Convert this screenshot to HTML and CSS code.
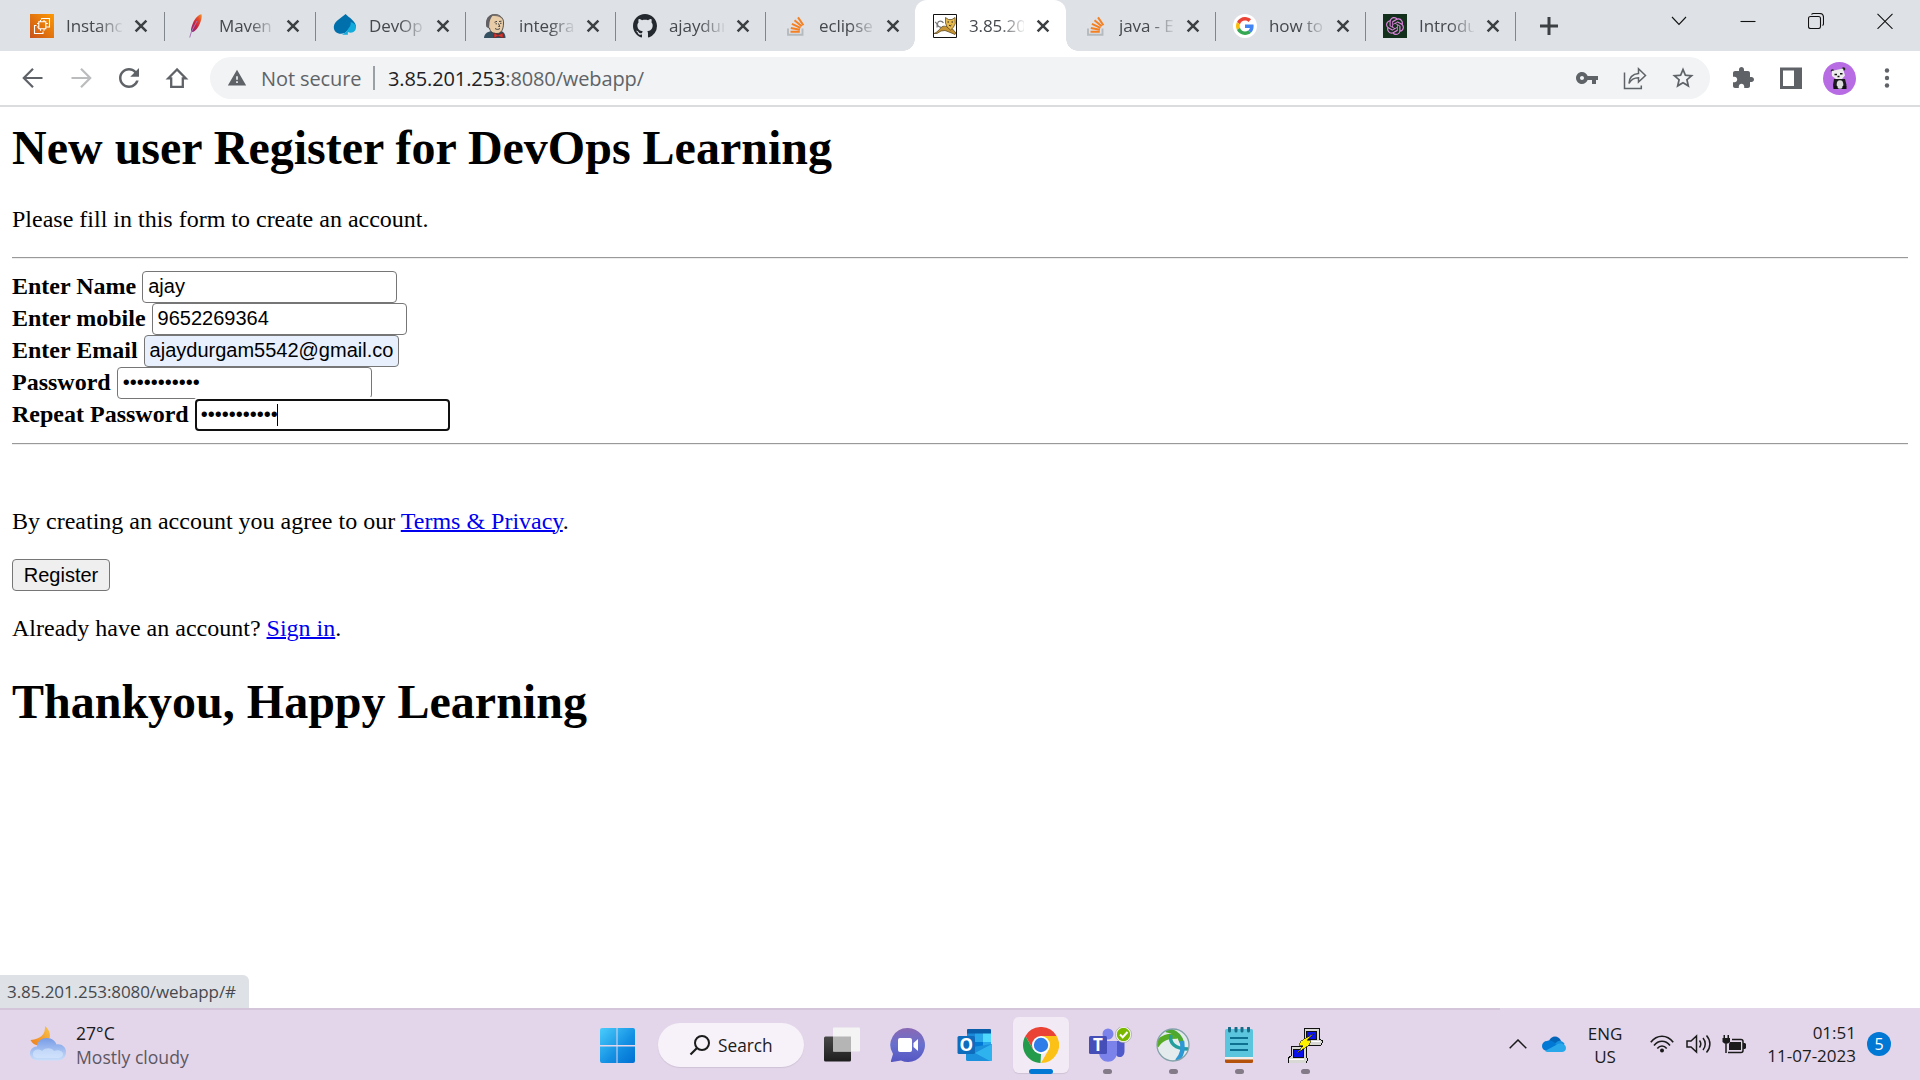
FILE: index.html
```html
<!DOCTYPE html>
<html lang="en">
<head>
<meta charset="utf-8">
<title>New user Register</title>
<link rel="stylesheet" href="styles.css">
</head>
<body>
<svg class="symbols" width="0" height="0" aria-hidden="true">
  <symbol id="x" viewBox="0 0 14 14"><path d="M1.6 1.6 12.4 12.4M12.4 1.6 1.6 12.4" stroke="#3c4043" stroke-width="2.5" fill="none"/></symbol>
  <symbol id="stack" viewBox="0 0 24 24"><path d="M5 14.5v6.3h14.5v-6.3" fill="none" stroke="#b5babf" stroke-width="1.9"/><path d="M7.5 17.7h9.3M7.8 13.9l9.1 1.8M8.9 9.9l8.6 4M11.5 6.2l7.2 6M15 3.4l5.4 7.8" fill="none" stroke="#f48024" stroke-width="2"/></symbol>
</svg>

<header class="tabstrip">
  <div class="tab first">
    <svg class="fav" viewBox="0 0 24 24"><defs><linearGradient id="aws" x1="0" y1="1" x2="1" y2="0"><stop offset="0" stop-color="#c8511b"/><stop offset="1" stop-color="#f90"/></linearGradient></defs><path fill="url(#aws)" d="M0 0h24v24H0z"/><path d="M8.800 7.800h7v7h-7zM10.500 6v1.800M14 6v1.800M10.500 15v1.800M14 15v1.800M7 9.500h1.800M7 13h1.800M16 9.500h1.800M16 13h1.800M11.500 5.500v-1h8v8.500h-2M6.500 11.500h-2v8h8.500v-2" fill="none" stroke="#fff" stroke-width="1.100"/></svg>
    <span class="title">Instanc</span><svg class="close"><use href="#x"/></svg>
  </div>
  <div class="tab">
    <svg class="fav" viewBox="0 0 24 24"><defs><linearGradient id="feather" x1="1" y1="0" x2="0" y2="1"><stop offset="0" stop-color="#f69923"/><stop offset=".3" stop-color="#e4492c"/><stop offset=".6" stop-color="#c8203f"/><stop offset="1" stop-color="#7e2d8e"/></linearGradient></defs><path fill="url(#feather)" d="M18.500.2c-3 .2-6.500 4.200-8.500 8.800-1.500 3.500-2.200 6.500-2 8.600l2 .4c2.200-1 5-4.200 6.500-7.600 1.800-4 2.800-8 2-10.200z"/><path d="M14 7 8.500 17.500 6.700 23.500" fill="none" stroke="#a978b6"/></svg>
    <span class="title">Maven</span><svg class="close"><use href="#x"/></svg>
  </div>
  <div class="tab">
    <svg class="fav" viewBox="0 0 24 24"><path fill="#0070ad" d="M12.500 0C9.500 3.300 1 7 .8 12.700.6 17 4 19.800 7.800 19.800c3 0 5.200-1.300 6.700-3.300 2-2.500 5.500-2.800 8.500-3.300C23.600 7.500 15.500 3.300 12.500 0z"/><path fill="#12abdb" d="M23 12.500c-1-3.300-4-4-5.500-4.500 1 3-1.500 5.500-3 8-1.200 2-3 3.300-5.500 4.800h6c-.3-.8-.1-2-.1-2.800 4 2 8.500-.5 8.100-5.500z"/></svg>
    <span class="title">DevOp</span><svg class="close"><use href="#x"/></svg>
  </div>
  <div class="tab">
    <svg class="fav" viewBox="0 0 24 24"><path fill="#335061" d="M1 24c0-2 1-4 3-5.500L8 17h9c3.500 0 5.500 3 5.500 7z"/><path fill="#e8cda8" stroke="#303030" stroke-width=".8" d="M4 8c0-5 3.500-7.500 8-7.500S21 4 20.500 9c0 6-2 10.500-6.500 10.500S7 17.500 6.500 14C4 14 3 11 4 8z"/><path fill="#626064" d="M3.500 13C1.500 5 6 .2 11.500.5 8 2.500 7.500 5 6.500 8.500L6 14z"/><path fill="#77716f" d="M10 .5c5-.8 9 2 10 5.500-2-3-5.500-4.500-10-4z"/><path d="M11.500 8.300l2.500-1M16 7.500l2.500-.3M12.500 9.800h1.500M17 9.300h1.500M15.500 9.500l1.300 3h-1.500M12 14.500c1.500 1.200 3.500 1.200 5 0" fill="none" stroke="#333" stroke-width=".9"/><path fill="#d33833" stroke="#6b1815" stroke-width=".5" d="m11 19 4 2 5-2v5l-5-2-4 2z"/></svg>
    <span class="title">integra</span><svg class="close"><use href="#x"/></svg>
  </div>
  <div class="tab">
    <svg class="fav" viewBox="0 0 16 16"><path fill="#24292f" d="M8 0C3.580 0 0 3.580 0 8c0 3.540 2.290 6.530 5.470 7.590.4.070.55-.170.55-.380 0-.190-.010-.820-.010-1.490-2.010.370-2.530-.490-2.690-.940-.090-.230-.480-.940-.820-1.130-.280-.150-.680-.520-.010-.530.630-.010 1.080.580 1.230.820.720 1.210 1.870.870 2.330.660.070-.520.280-.870.510-1.070-1.780-.2-3.640-.890-3.640-3.950 0-.870.310-1.590.820-2.150-.080-.2-.360-1.020.080-2.120 0 0 .670-.210 2.200.820.640-.180 1.320-.270 2-.270s1.360.090 2 .270c1.530-1.040 2.200-.820 2.200-.820.440 1.100.160 1.920.080 2.120.510.560.820 1.270.820 2.150 0 3.070-1.870 3.750-3.650 3.950.290.250.540.730.540 1.480 0 1.070-.010 1.930-.010 2.200 0 .210.150.460.550.380A8.010 8.010 0 0 0 16 8c0-4.420-3.580-8-8-8z"/></svg>
    <span class="title">ajaydur</span><svg class="close"><use href="#x"/></svg>
  </div>
  <div class="tab nosep">
    <svg class="fav"><use href="#stack"/></svg>
    <span class="title">eclipse</span><svg class="close"><use href="#x"/></svg>
  </div>
  <div class="tab active">
    <svg class="fav" viewBox="0 0 24 24"><path fill="#fff" stroke="#111" d="M.5.5h23v23H.5z"/><path d="M10.500 9C9 6.500 5 6.500 4.500 9.500S7 13.500 8 13M2 8c2 1 2.500 3 2 5.500" fill="none" stroke="#777" stroke-width="1.200"/><path fill="#c59332" stroke="#4d3b1a" stroke-width=".7" d="M1 19.500c3-1 5-3.500 7.500-6.500 2-1.500 4-.5 5-.5l6 2.500 3.500 4-1 1.500-6-2.500-4-1.500-4 .5-4 2.500H1z"/><path fill="#e5b94e" stroke="#4d3b1a" stroke-width=".7" d="m12.500 3.500 3 2h3.500l3-2 .3 6-2 4-2.800 2.500-3.500-3-1.500-4z"/><path d="M14.500 8h1.500M18.500 8H20M16 11l1.200 1 1.200-1" stroke="#222" fill="none"/></svg>
    <span class="title">3.85.20</span><svg class="close"><use href="#x"/></svg>
  </div>
  <div class="tab">
    <svg class="fav"><use href="#stack"/></svg>
    <span class="title">java - E</span><svg class="close"><use href="#x"/></svg>
  </div>
  <div class="tab">
    <svg class="fav" viewBox="-8 -8 64 64"><circle cx="24" cy="24" r="32" fill="#fff"/><path fill="#ea4335" d="M24 9.500c3.540 0 6.710 1.220 9.210 3.600l6.850-6.850C35.900 2.380 30.470 0 24 0 14.620 0 6.510 5.380 2.560 13.220l7.980 6.190C12.430 13.720 17.740 9.500 24 9.500z"/><path fill="#4285f4" d="M46.980 24.550c0-1.570-.150-3.090-.380-4.550H24v9.020h12.940c-.580 2.960-2.260 5.480-4.780 7.180l7.730 6c4.510-4.180 7.090-10.360 7.090-17.650z"/><path fill="#fbbc05" d="M10.530 28.590c-.480-1.450-.760-2.990-.760-4.590s.270-3.140.760-4.590l-7.980-6.190C.920 16.460 0 20.120 0 24c0 3.880.920 7.540 2.560 10.780l7.970-6.190z"/><path fill="#34a853" d="M24 48c6.480 0 11.930-2.130 15.890-5.810l-7.730-6c-2.150 1.450-4.920 2.300-8.160 2.300-6.260 0-11.570-4.220-13.470-9.910l-7.980 6.190C6.510 42.620 14.620 48 24 48z"/></svg>
    <span class="title">how to</span><svg class="close"><use href="#x"/></svg>
  </div>
  <div class="tab">
    <svg class="fav" viewBox="-4 -4 32 32"><path fill="#12301b" d="M-4-4h32v32H-4z"/><path fill="#dd83dd" d="M22.2819 9.8211a5.9847 5.9847 0 0 0-.5157-4.9108 6.0462 6.0462 0 0 0-6.5098-2.9A6.0651 6.0651 0 0 0 4.9807 4.1818a5.9847 5.9847 0 0 0-3.9977 2.9 6.0462 6.0462 0 0 0 .7427 7.0966 5.98 5.98 0 0 0 .511 4.9107 6.051 6.051 0 0 0 6.5146 2.9001A5.9847 5.9847 0 0 0 13.2599 24a6.0557 6.0557 0 0 0 5.7718-4.2058 5.9894 5.9894 0 0 0 3.9977-2.9001 6.0557 6.0557 0 0 0-.7475-7.0729zm-9.022 12.6081a4.4755 4.4755 0 0 1-2.8764-1.0408l.1419-.0804 4.7783-2.7582a.7948.7948 0 0 0 .3927-.6813v-6.7369l2.02 1.1686a.071.071 0 0 1 .038.052v5.5826a4.504 4.504 0 0 1-4.4945 4.4944zm-9.6607-4.1254a4.4708 4.4708 0 0 1-.5346-3.0137l.142.0852 4.783 2.7582a.7712.7712 0 0 0 .7806 0l5.8428-3.3685v2.3324a.0804.0804 0 0 1-.0332.0615L9.74 19.9502a4.4992 4.4992 0 0 1-6.1408-1.6464zM2.3408 7.8956a4.485 4.485 0 0 1 2.3655-1.9728V11.6a.7664.7664 0 0 0 .3879.6765l5.8144 3.3543-2.0201 1.1685a.0757.0757 0 0 1-.071 0l-4.8303-2.7865A4.504 4.504 0 0 1 2.3408 7.872zm16.5963 3.8558L13.1038 8.364 15.1192 7.2a.0757.0757 0 0 1 .071 0l4.8303 2.7913a4.4944 4.4944 0 0 1-.6765 8.1042v-5.6772a.79.79 0 0 0-.407-.667zm2.0107-3.0231l-.142-.0852-4.7735-2.7818a.7759.7759 0 0 0-.7854 0L9.409 9.2297V6.8974a.0662.0662 0 0 1 .0284-.0615l4.8303-2.7866a4.4992 4.4992 0 0 1 6.6802 4.66zM8.3065 12.863l-2.02-1.1638a.0804.0804 0 0 1-.038-.0567V6.0742a4.4992 4.4992 0 0 1 7.3757-3.4537l-.142.0805L8.704 5.459a.7948.7948 0 0 0-.3927.6813zm1.0976-2.3654l2.602-1.4998 2.6069 1.4998v2.9994l-2.5974 1.4997-2.6067-1.4997Z"/></svg>
    <span class="title">Introdu</span><svg class="close"><use href="#x"/></svg>
  </div>
  <svg class="newtab" viewBox="0 0 18 18"><path d="M9 0v18M0 9h18" stroke="#3c4043" stroke-width="3"/></svg>
  <div class="winctl">
    <svg viewBox="0 0 16 16"><path d="M1 4l7 7.500L15 4"/></svg>
    <svg viewBox="0 0 16 16"><path d="M.5 8.500h15"/></svg>
    <svg viewBox="0 0 16 16"><rect x=".5" y="3.500" width="12" height="12" rx="2"/><path d="M3.500 1.500c.4-.7 1-1 2-1h6c2.500 0 4 1.500 4 4v6c0 1-.3 1.600-1 2"/></svg>
    <svg viewBox="0 0 16 16"><path d="M.5.8 15.500 15.800M15.500.8.5 15.800"/></svg>
  </div>
</header>

<nav class="toolbar">
  <div class="navbtns">
    <svg viewBox="0 0 24 24"><path d="M21.500 12H3.500M12 2.800 2.800 12l9.200 9.200" fill="none" stroke="#5f6368" stroke-width="2.200"/></svg>
    <svg viewBox="0 0 24 24"><path d="M2.500 12h18M12 2.800 21.200 12 12 21.200" fill="none" stroke="#babcbe" stroke-width="2.200"/></svg>
    <svg class="reload" viewBox="0 0 24 24"><path fill="#5f6368" d="M17.650 6.350C16.200 4.900 14.210 4 12 4c-4.420 0-7.990 3.580-7.990 8s3.570 8 7.990 8c3.730 0 6.840-2.550 7.730-6h-2.080c-.820 2.330-3.040 4-5.650 4-3.310 0-6-2.690-6-6s2.690-6 6-6c1.660 0 3.140.690 4.220 1.780L13 11h7V4l-2.350 2.350z"/></svg>
    <svg viewBox="0 0 24 24"><path d="M12 3.500 3.300 12.300h2.900v8.500h11.600v-8.500h2.900z" fill="none" stroke="#5f6368" stroke-width="2.300"/></svg>
  </div>
  <div class="omnibox">
    <svg class="warn" viewBox="0 0 24 24"><path fill="#5f6368" d="M1 21h22L12 2 1 21zm12-3h-2v-2h2v2zm0-4h-2v-4h2v4z"/></svg>
    <span class="insecure">Not secure</span><i class="divider"></i>
    <span class="url"><b>3.85.201.253</b>:8080/webapp/</span>
    <div class="boxicons">
      <svg viewBox="0 0 24 24"><path fill="#5f6368" d="M12.650 10C11.830 7.670 9.610 6 7 6c-3.310 0-6 2.690-6 6s2.690 6 6 6c2.610 0 4.830-1.670 5.650-4H17v4h4v-4h2v-4H12.650zM7 14c-1.100 0-2-.9-2-2s.9-2 2-2 2 .9 2 2-.9 2-2 2z"/></svg>
      <svg viewBox="0 0 24 24"><path d="M1.500 6.500v16h16.800v-3M6 17.500c.3-6 3.500-9.500 9.500-10V2.800L22.500 9.500l-7 6.500v-4.300C11 11.700 8 13.500 6 17.500z" fill="none" stroke="#5f6368" stroke-width="1.500"/></svg>
      <svg viewBox="0.800 0.800 22.400 22.400"><path fill="#5f6368" d="M22 9.240l-7.190-.620L12 2 9.190 8.630 2 9.240l5.460 4.730L5.820 21 12 17.270 18.180 21l-1.630-7.030L22 9.240zM12 15.400l-3.760 2.270 1-4.280-3.320-2.880 4.380-.380L12 6.100l1.710 4.040 4.380.380-3.320 2.880 1 4.280L12 15.400z"/></svg>
    </div>
  </div>
  <div class="actions">
    <svg viewBox="0 0 24 24"><path fill="#5f6368" d="M20.500 11H19V7c0-1.100-.9-2-2-2h-4V3.500C13 2.120 11.880 1 10.500 1S8 2.120 8 3.500V5H4c-1.100 0-1.990.9-1.990 2v3.800H3.500c1.490 0 2.700 1.210 2.700 2.700s-1.210 2.700-2.700 2.700H2V20c0 1.100.9 2 2 2h3.800v-1.500c0-1.490 1.210-2.700 2.700-2.700 1.490 0 2.700 1.210 2.700 2.700V22H17c1.100 0 2-.9 2-2v-4h1.500c1.380 0 2.500-1.120 2.500-2.500S21.880 11 20.500 11z"/></svg>
    <svg viewBox="0 0 24 24"><path fill="#5f6368" fill-rule="evenodd" d="M1 1.500h22v21.500H1zM4 4.500v15.500h11V4.500z"/></svg>
    <svg class="avatar" viewBox="0 0 33 33"><circle cx="16.500" cy="16.500" r="16.500" fill="#b76ce4"/><circle cx="9.500" cy="9" r="1.800" fill="#222"/><circle cx="20.500" cy="7" r="1.800" fill="#222"/><path d="M11 17h11l1.500 6-1 4H11l-1-4z" fill="#1d1a20"/><ellipse cx="17" cy="22.500" rx="3.300" ry="4.300" fill="#dcdcdc"/><path d="M8.500 9 20 6.500l2 7-3 3.500h-6l-4-3z" fill="#ececec"/><path d="M11.500 12.500h2.500M17 11.800h2.500M14.500 14.500h2" stroke="#111" stroke-width="1.600"/><path d="M10.500 25.500h4M19.500 25.500h4" stroke="#111" stroke-width="3"/></svg>
    <svg viewBox="0 0 24 24"><g fill="#5f6368"><circle cx="12" cy="4.500" r="2.200"/><circle cx="12" cy="12" r="2.200"/><circle cx="12" cy="19.500" r="2.200"/></g></svg>
  </div>
</nav>

<main class="page">
  <h1 class="heading">New user Register for DevOps Learning</h1>
  <p class="para intro">Please fill in this form to create an account.</p>
  <hr class="rule">
  <form class="form">
    <div class="field"><label>Enter Name</label><input type="text" value="ajay"></div>
    <div class="field"><label>Enter mobile</label><input type="text" value="9652269364"></div>
    <div class="field"><label>Enter Email</label><input class="filled" type="text" value="ajaydurgam5542@gmail.com"></div>
    <div class="field"><label>Password</label><input type="password" value="durgam12345"></div>
    <div class="field"><label>Repeat Password</label><span class="focus"><input type="password" value="durgam12345"><i class="caret"></i></span></div>
  </form>
  <hr class="rule">
  <p class="para terms">By creating an account you agree to our <a href="#">Terms &amp; Privacy</a>.</p>
  <button class="register" type="button">Register</button>
  <p class="para signin">Already have an account? <a href="#">Sign in</a>.</p>
  <h1 class="heading thanks">Thankyou, Happy Learning</h1>
  <div class="status"><span>3.85.201.253:8080/webapp/#</span></div>
</main>

<footer class="taskbar">
  <div class="weather">
    <svg viewBox="0 0 36 36"><defs><linearGradient id="moon" x1="1" y1="0" x2="0" y2="1"><stop offset="0" stop-color="#f8c64c"/><stop offset="1" stop-color="#ee7d19"/></linearGradient><linearGradient id="cl" x1="0" y1="0" x2="0" y2="1"><stop offset="0" stop-color="#779be6"/><stop offset="1" stop-color="#c9defa"/></linearGradient></defs><path fill="url(#moon)" d="M15 0c.5 8-4 13-14.500 14C3 20 10 21 16 17c5-3.500 6-11-1-17z"/><path fill="url(#cl)" d="M7 20.500C7 15 12 12 17 12c5 0 8.500 3 9.500 6.500 5-1 9.500 2.500 9.500 7.500s-4 8.500-8 8.500H8c-5 0-8-3-8-7s3-7 7-7z"/><path fill="#d9e8fd" opacity=".6" d="M3 28c0-4 5-6 9-3 4-4 10-3 12 0 4-2 9 0 9 3s-3 4-6 4H9c-4 0-6-1-6-4z"/></svg>
    <div class="wtext"><span>27°C</span><span class="dim">Mostly cloudy</span></div>
  </div>
  <div class="app"><svg class="win" viewBox="0 0 35 35"><defs><linearGradient id="wl" gradientUnits="userSpaceOnUse" x1="0" y1="0" x2="35" y2="35"><stop offset="0" stop-color="#4bcdfc"/><stop offset=".6" stop-color="#128ee2"/><stop offset="1" stop-color="#0070d2"/></linearGradient></defs><path fill="url(#wl)" d="M0 2q0-2 2-2h14.500v17H0zM17.500 0H33q2 0 2 2v15H17.500zM0 18.500h16.500V35H2q-2 0-2-2zM17.500 18.500H35V33q0 2-2 2H17.500z"/></svg></div>
  <div class="search"><svg viewBox="0 0 22 22"><circle cx="13" cy="9" r="7" fill="none" stroke="#1b1b1b" stroke-width="2"/><path d="M8 14 1.500 20.500" stroke="#1b1b1b" stroke-width="2.200"/></svg><span>Search</span></div>
  <div class="app"><svg viewBox="0 0 36 36"><defs><linearGradient id="tv" x1="0" y1="0" x2="0" y2="1"><stop offset="0" stop-color="#484848"/><stop offset="1" stop-color="#1e1e1e"/></linearGradient></defs><rect y="9.500" width="27" height="25" rx="1.500" fill="url(#tv)"/><rect x="9" y=".5" width="27" height="24" rx="1" fill="#f4f4f4"/><path fill="#b5b5b5" d="M9 9.500h18v15H9z"/></svg></div>
  <div class="app"><svg viewBox="0 0 36 36"><defs><linearGradient id="ch" x1="0" y1="0" x2="0" y2="1"><stop offset="0" stop-color="#8a68b4"/><stop offset=".5" stop-color="#6870ce"/><stop offset="1" stop-color="#5556c2"/></linearGradient></defs><path fill="url(#ch)" d="M18 1a17 17 0 1 1-7 32.500L2 35c-1 0-1.300-.5-1-1.500L3 27A17 17 0 0 1 18 1z"/><rect x="8" y="11" width="14" height="14" rx="2" fill="#fff"/><path fill="#fff" d="m23.500 16 4.500-4v12l-4.500-4z"/></svg></div>
  <div class="app shift"><svg viewBox="0 0 36 36"><path fill="#0a5da8" d="M10 3q0-1 1-1h22q1 0 1 1v7H10z"/><path fill="#1a8ad8" d="M10 6.500h8v17h-8z"/><path fill="#28a8ea" d="M18 6.500h8v9h-8z"/><path fill="#50d9ff" d="M26 6.500h8v9h-8z"/><path fill="#0078d4" d="M18 15h8v8h-8z"/><path fill="#28a8ea" d="M26 15h8v5h-8z"/><path fill="#1b90dc" d="M9 21l26-4v15.500q0 1.500-1.500 1.500h-23Q9 34 9 32.500z"/><path fill="#2fb3ef" d="M35 17 18 26l15 8q2 0 2-1.500z"/><rect x=".5" y="9" width="17.500" height="18" rx="1.500" fill="#0f6cbd"/><text class="glyph" x="9.300" y="23.500">O</text></svg></div>
  <div class="app open"><svg viewBox="0 0 36 36"><path fill="#ea4335" d="M2.400 9A18 18 0 0 1 33.600 9H18l-7.800 13.500z"/><path fill="#249b4a" d="M2.400 9l7.800 13.500L18 27l-.5 9A18 18 0 0 1 2.400 9z"/><path fill="#fbc116" d="M33.600 9A18 18 0 0 1 18 36l7.800-13.500L18 9z"/><circle cx="18" cy="18" r="9" fill="#fff"/><circle cx="18" cy="18" r="7.200" fill="#2f7de9"/></svg><i class="mark wide"></i></div>
  <div class="app"><svg class="teams" viewBox="0 0 44 36"><circle cx="19" cy="7" r="5.500" fill="#7b83eb"/><circle cx="31" cy="9" r="4" fill="#5059c9"/><path fill="#5059c9" d="M26 14h9.500v10c0 8-9.500 8-9.500 0z"/><path fill="#7b83eb" d="M10 14h18v11c0 13-18 13-18 0z"/><rect y="9" width="18" height="18" rx="1.500" fill="#464eb8"/><text class="glyph" x="9" y="23.500">T</text><circle cx="34.500" cy="7.500" r="8" fill="#fff" stroke="#999" stroke-width=".7"/><circle cx="34.500" cy="7.500" r="6.700" fill="#7ab800"/><path d="m31 7.500 2.700 2.700L38.500 5" fill="none" stroke="#fff" stroke-width="2"/></svg><i class="mark"></i></div>
  <div class="app"><svg viewBox="0 0 36 36"><defs><clipPath id="globe"><circle cx="18" cy="18" r="16"/></clipPath></defs><circle cx="18" cy="18" r="16.500" fill="#e4ebec"/><g clip-path="url(#globe)" fill="none"><path d="M1 19C6 10 14 9 22 9" stroke="#58ac25" stroke-width="5.500"/><path d="M11 3c8 1 14 5 16 13" stroke="#4ca82f" stroke-width="4.500"/><path d="M16 8c-2 8 4 14 17 14" stroke="#239e9d" stroke-width="3.500"/><path d="M27 14c1 8 1 13-5 20" stroke="#2c98d4" stroke-width="4.500"/></g><circle cx="18" cy="18" r="16" fill="none" stroke="#839fa9" stroke-width="1.300"/></svg><i class="mark"></i></div>
  <div class="app"><svg viewBox="0 0 36 36"><path fill="#b4510b" d="M4 31h28v3.500q0 1.500-1.500 1.500h-25Q4 36 4 34.500z"/><path fill="#f3eee9" d="M4 30h28v2.500H4z"/><path fill="#5cc5de" d="M5.500 2h25Q32 2 32 3.500V30H4V3.500Q4 2 5.500 2z"/><path d="M8.500 1v3M15 1v3M21 1v3M27.500 1v3" stroke="#176b87" stroke-width="3" stroke-linecap="round"/><path d="M9 11h18M9 17h18M9 23h18" stroke="#0d7091" stroke-width="2"/></svg><i class="mark"></i></div>
  <div class="app"><svg viewBox="0 0 36 36" shape-rendering="crispEdges"><g stroke="#111" stroke-width="1"><path fill="#d8d8d4" d="M17 1h15v11l4 2-2 4H19l-2-4z"/><path fill="#0a12ec" d="M19 4h10v8H19z"/><path fill="#d8d8d4" d="M4 19h15v11l2 2-2 4H1v-5l3-2z"/><path fill="#0a12ec" d="M6 22h10v8H6z"/></g><path fill="#fff" d="M2 32h15v1H2zM18 14h15v1H18z"/><path fill="#fff200" stroke="#222" stroke-width=".6" d="m26 7-12 7-2 4 4 1-6 7 12-8 2-4-4-1z"/></svg><i class="mark"></i></div>
  <div class="tray">
    <svg class="chev" viewBox="0 0 18 10"><path d="M.7 9.300 9 1l8.300 8.300" fill="none" stroke="#1b1b1b" stroke-width="1.500"/></svg>
    <svg class="cloud" viewBox="0 0 24 16"><path fill="#0364b8" d="M7 5c2-6 10-6 12 0l-5 5z"/><path fill="#0078d4" d="M5 15a5 5 0 0 1 0-10c3-1 6 0 8 2l3 2-8 7z"/><path fill="#1490df" d="M13 8c2-3 4-3.500 6-3 3 1 3.500 3 3.500 3L20 12z"/><path fill="#28a8ea" d="M3 15 15 8.500c3-2 9-.5 9 3.500 0 2.500-2 4-4 4H5z"/></svg>
    <div class="lang"><span>ENG</span><span>US</span></div>
    <svg class="net" viewBox="0 0 24 18"><g fill="none" stroke="#1b1b1b" stroke-width="1.600"><path d="M.8 7.200C7-.7 17-.7 23.200 7.200M4 10.500c4.500-5.600 11.500-5.600 16 0M7.300 13.500c2.700-3.400 6.700-3.400 9.400 0"/></g><circle cx="12" cy="15.500" r="2" fill="#1b1b1b"/></svg>
    <svg class="vol" viewBox="0 0 25 20"><g fill="none" stroke="#1b1b1b" stroke-width="1.500"><path d="M1 7h4l5.500-5v16L5 13H1zM13.500 6.500c1.500 2 1.500 5 0 7M17 4c3 3.500 3 8.500 0 12M20.500 1.500c4.500 5 4.500 12 0 17"/></g></svg>
    <svg class="bat" viewBox="0 0 24 19"><path fill="#1b1b1b" d="M1.500 0H3v3h2.500V0H7v3h1v4L6 8.500H2.500L.5 7V3h1zM8 7h11v8H7v-6z"/><path d="M4 8v10M10 4.500h9q2 0 2 2v9q0 2-2 2H6" fill="none" stroke="#1b1b1b" stroke-width="1.500"/><path fill="#1b1b1b" d="M21 8h2l1 1v4l-1 1h-2z"/></svg>
    <div class="clock"><span>01:51</span><span>11-07-2023</span></div>
    <div class="badge">5</div>
  </div>
</footer>
</body>
</html>
```

FILE: styles.css
```css
* { box-sizing: border-box; }
body {
  margin: 0;
  width: 1920px;
  height: 1080px;
  overflow: hidden;
  display: flex;
  flex-direction: column;
  background: #fff;
  font-family: "Open Sans", "Noto Sans", sans-serif;
}
svg { flex: none; display: block; }
.symbols { position: absolute; }

/* tab strip */
.tabstrip { height: 51px; flex: none; display: flex; background: #dee1e6; padding-left: 14px; }
.tab {
  width: 150px; height: 51px; padding-left: 17px; flex: none;
  display: flex; align-items: center; position: relative;
}
.tab.first { width: 152px; padding-left: 16px; }
.tab.first .title { width: 56px; }
.tab.first::after { right: 1px; }
.tab::after {
  content: ""; position: absolute; right: 0; top: 12px;
  width: 1px; height: 29px; background: #80868b;
}
.tab.nosep::after { display: none; }
.fav { width: 24px; height: 24px; position: relative; top: .5px; }
.title {
  margin-left: 12px; width: 55px; overflow: hidden; white-space: nowrap;
  font-size: 17px; line-height: 30px; letter-spacing: -.1px; color: #45494d;
  -webkit-mask-image: linear-gradient(90deg, #000 55%, transparent 105%);
  mask-image: linear-gradient(90deg, #000 55%, transparent 105%);
}
.close { width: 14px; height: 14px; margin-left: 12px; }
.tab.active { width: 151px; margin-left: -1px; padding-left: 18px; background: #fff; border-radius: 12px 12px 0 0; }
.tab.active::before, .tab.active::after {
  content: ""; position: absolute; top: auto; bottom: 0; width: 12px; height: 12px;
}
.tab.active::before { left: -12px; background: radial-gradient(circle at 0 0, transparent 11.5px, #fff 12px); }
.tab.active::after { right: -12px; background: radial-gradient(circle at 100% 0, transparent 11.5px, #fff 12px); }
.newtab { width: 18px; height: 18px; margin: 17px 0 0 24px; }
.winctl { display: flex; gap: 52.5px; margin: 13px 0 0 113px; }
.winctl svg { width: 16px; height: 16px; fill: none; stroke: #111; stroke-width: 1.1; }

/* toolbar */
.toolbar {
  height: 56px; flex: none; display: flex; align-items: center;
  border-bottom: 2px solid #dadcde; background: #fff; padding-left: 21px;
}
.navbtns { display: flex; gap: 24px; width: 189px; align-items: center; }
.navbtns svg { width: 24px; height: 24px; }
.navbtns .reload { width: 30px; height: 30px; margin: 0 -3px; }
.omnibox {
  width: 1500px; height: 42px; border-radius: 21px; background: #f1f3f4;
  display: flex; align-items: center; padding: 0 15px 0 17px; flex: none;
}
.warn { width: 20px; height: 20px; }
.insecure { margin-left: 14px; width: 102px; font-size: 20px; letter-spacing: -.1px; color: #5f6368; white-space: nowrap; }
.divider { width: 2px; height: 24px; background: #9aa0a6; margin: 0 13px 0 10px; }
.url { font-size: 20px; letter-spacing: -.12px; color: #5f6368; white-space: nowrap; }
.url b { font-weight: 400; color: #202124; }
.boxicons { display: flex; gap: 24px; margin-left: auto; }
.boxicons svg { width: 24px; height: 24px; }
.actions { display: flex; align-items: center; margin-left: 21px; gap: 24px; }
.actions svg { width: 24px; height: 24px; }
.actions .avatar { width: 33px; height: 33px; margin: 0 -4.5px; }

/* web page */
.page {
  flex: 1; position: relative; padding: 13px 12px 0; overflow: hidden;
  font-family: "Liberation Serif", serif; font-size: 24px; line-height: 28px; color: #000;
}
.heading { margin: 0; font-size: 48px; line-height: 55px; }
.para { margin: 0; }
.intro { margin-top: 30px; }
.rule { margin: 24px 0 12px; border: 0; height: 2px; border-top: 1px solid #999; border-bottom: 1px solid #eee; }
.field { display: flex; height: 32px; align-items: center; }
.field label { font-weight: 700; margin: 0 6px 2px 0; white-space: nowrap; }
.field input {
  width: 255px; height: 32px; margin: 0; padding: 0 5px 1px; border: 1px solid #767676; border-radius: 4px;
  font: 20px "Liberation Sans", sans-serif; color: #000; background: #fff; outline: 0;
}
.field input.filled { background: #e8f0fe; }
.form + .rule { margin-top: 12px; }
.field .focus { position: relative; }
.field .focus input { display: block; border: 2px solid #101010; padding: 0 4px 1px; box-shadow: 0 0 0 2px #fff; }
.caret { position: absolute; left: 82px; top: 5px; width: 1px; height: 22px; background: #000; }
.terms { margin-top: 62px; }
.page a { color: #0000ee; text-decoration-thickness: 2px; }
.register {
  display: block; margin-top: 24px; width: 98px; height: 32px; padding: 0;
  border: 1px solid #767676; border-radius: 4px; background: #efefef; color: #000;
  font: 20px "Liberation Sans", sans-serif;
}
.signin { margin-top: 23px; }
.thanks { margin-top: 32px; }
.status {
  position: absolute; left: 0; bottom: 0; width: 249px; height: 33px;
  background: #dee1e6; border-radius: 0 6px 0 0; padding-left: 7px;
  font: 17px/34px "Open Sans", sans-serif; letter-spacing: -.08px; color: #45494d; white-space: nowrap;
}

/* taskbar */
.taskbar {
  height: 72px; flex: none; display: flex; align-items: center;
  background: linear-gradient(#d4c5da, #d4c5da) 0 0 / 1500px 2px no-repeat, #e3d6ea;
  color: #1b1b1b; font-size: 17px;
}
.weather { width: 584px; display: flex; padding-left: 30px; align-items: center; }
.weather svg { width: 36px; height: 36px; }
.wtext, .lang, .clock { display: flex; flex-direction: column; line-height: 24px; white-space: nowrap; }
.wtext { margin: 2px 0 0 10px; font-size: 17.6px; }
.dim { color: #5d5762; }
.app { width: 66px; height: 72px; display: flex; align-items: center; justify-content: center; position: relative; flex: none; }
.app.shift { margin-left: 1px; }
.app svg { width: 36px; height: 36px; position: relative; top: 1px; }
.app svg.win { width: 35px; height: 35px; }
.app svg.teams { width: 44px; left: 4px; }
.app.open::before {
  content: ""; position: absolute; left: 5px; top: 9px; width: 56px; height: 56px;
  border-radius: 6px; background: #f2ebf6; box-shadow: 0 1px 1px #cfc2d6;
}
.mark { position: absolute; left: 29px; top: 61px; width: 9px; height: 5px; border-radius: 3px; background: #837b88; }
.mark.wide { left: 21px; width: 24px; background: #0078d4; }
.glyph { font: 700 17px "Open Sans", sans-serif; fill: #fff; text-anchor: middle; }
.search {
  width: 146px; height: 44px; margin: 2px 5px 0 8px; border-radius: 22px; background: #f7f2f9;
  box-shadow: 0 1px 1px #cfc2d6; display: flex; align-items: center; padding-left: 31px; flex: none;
}
.search svg { width: 22px; height: 22px; }
.search span { margin-left: 7px; font-size: 17.3px; }
.tray { display: flex; align-items: center; margin-left: 171px; height: 72px; }
.chev { width: 18px; height: 10px; }
.cloud { width: 24px; height: 16px; margin-left: 15px; }
.lang { width: 60px; margin: 1px 0 0 9px; align-items: center; line-height: 23px; }
.net { width: 24px; height: 18px; margin-left: 15px; }
.vol { width: 25px; height: 20px; margin-left: 12px; }
.bat { width: 24px; height: 19px; margin-left: 11px; }
.clock { width: 94px; margin-left: 16px; align-items: flex-end; line-height: 23px; }
.badge {
  width: 24px; height: 24px; border-radius: 50%; margin-left: 11px; background: #0078d4;
  color: #fff; font-size: 16px; line-height: 24px; text-align: center;
}
```
